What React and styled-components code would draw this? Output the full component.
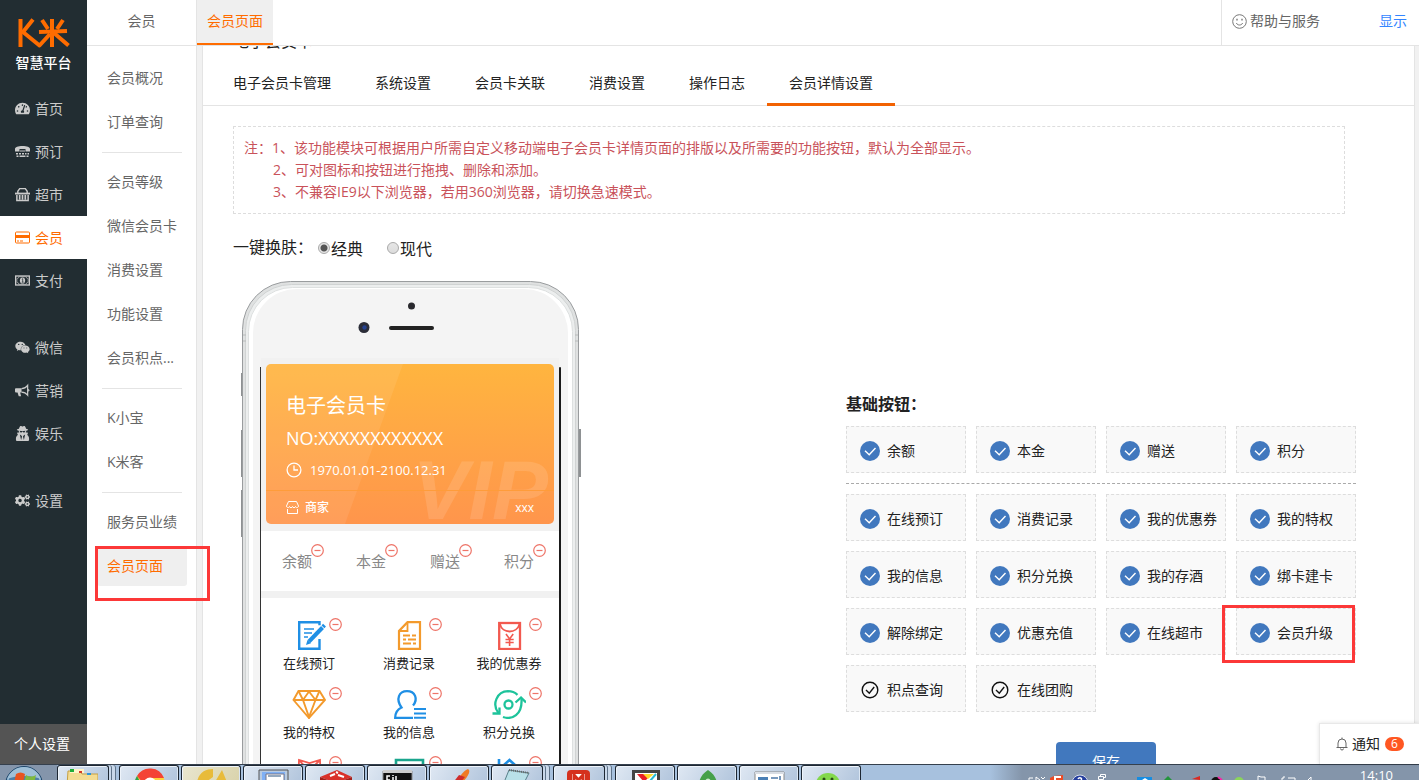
import React from 'react'
import styled, { createGlobalStyle, css } from 'styled-components'
import { FaTachometerAlt, FaWeixin, FaUserSecret, FaCogs } from 'react-icons/fa'

const ORANGE = '#ff6c00'
const BLUE = '#4178be'
const LINE = '#e4e4e4'

const GlobalStyle = createGlobalStyle`
* { box-sizing: border-box; }
body {
    margin: 0;
    font-family: "Open Sans", "Noto Sans CJK SC", sans-serif;
    font-size: 14px;
    line-height: 22px;
    color: #222;
    background: #fff;
}
button { font: inherit; border: 0; padding: 0; cursor: pointer; }
a { color: inherit; text-decoration: none; }
svg { display: block; }
`

const Screen = styled.div`
height: 100vh;
display: flex;
flex-direction: column;
overflow: hidden;
`

const Workspace = styled.div`
flex: 1;
min-height: 0;
display: flex;
position: relative;
`

/* ---------- dark sidebar ---------- */

const Sidebar = styled.aside`
width: 87px;
flex: none;
display: flex;
flex-direction: column;
background: #222d32;
`

const Brand = styled.div`
height: 87px;
padding-top: 17px;
display: flex;
flex-direction: column;
align-items: center;
color: #fff;
font-weight: 500;
line-height: 24px;
`

const NavList = styled.nav`
flex: 1;
display: flex;
flex-direction: column;
`

const NavLink = styled.a`
height: 43px;
padding-left: 15px;
display: flex;
align-items: center;
gap: 5px;
color: ${({ $active }) => ($active ? ORANGE : '#cbcbcb')};
background: ${({ $active }) => ($active ? '#fff' : 'transparent')};
margin-top: ${({ $gap }) => ($gap ? '24px' : '0')};

svg {
    width: 15px;
    height: 15px;
}
`

const Personal = styled.a`
height: 40px;
line-height: 40px;
text-align: center;
padding-right: 3px;
color: #fff;
background: #545454;
`

/* ---------- second level menu ---------- */

const SubMenu = styled.aside`
width: 110px;
flex: none;
border-right: 1px solid ${LINE};
color: #666;
`

const SubTitle = styled.div`
height: 46px;
line-height: 42px;
text-align: center;
border-bottom: 1px solid ${LINE};
`

const SubList = styled.nav`
padding-top: 10px;
display: flex;
flex-direction: column;
`

const SubLink = styled.a`
display: block;
height: 40px;
margin: 2px 9px 2px 10px;
padding-left: 10px;
line-height: 40px;
white-space: nowrap;
border-radius: 3px;
color: ${({ $active }) => ($active ? ORANGE : 'inherit')};
background: ${({ $active }) => ($active ? '#efefef' : 'transparent')};
`

const SubDivider = styled.hr`
align-self: stretch;
margin: 8px 14px 7px 15px;
border: 0;
border-top: 1px solid ${LINE};
`

const markStyle = css`
position: absolute;
border: 3px solid #fc3838;
pointer-events: none;
z-index: 3;
`

const MenuMark = styled.span`
${markStyle}
left: 8px;
top: 2px;
width: 115px;
height: 55px;
`

const MenuMarkHolder = styled.div`
position: relative;
display: flex;
flex-direction: column;
`

/* ---------- main column ---------- */

const Main = styled.div`
flex: 1;
min-width: 0;
display: flex;
flex-direction: column;
`

const TopBar = styled.header`
height: 46px;
flex: none;
display: flex;
justify-content: space-between;
border-bottom: 1px solid ${LINE};
line-height: 42px;
`

const PageTab = styled.a`
height: 45px;
padding: 0 10px;
color: ${ORANGE};
background: #efefef;
border-bottom: 2px solid ${ORANGE};
`

const TopTools = styled.div`
width: 198px;
padding: 0 12px 0 10px;
display: flex;
justify-content: space-between;
border-left: 1px solid ${LINE};
color: #666;
`

const HelpLink = styled.a`
display: flex;
align-items: center;
gap: 3px;
height: 42px;
`

const ShowLink = styled.a`
color: #3385ff;
`

const Scroller = styled.div`
flex: 1;
min-height: 0;
overflow: hidden;
padding: 0 4px 0 5px;
background: #f1f1f1;
`

const Panel = styled.section`
min-height: 100%;
border: 1px solid ${LINE};
border-width: 0 1px;
background: #fff;
`

const PanelTitle = styled.h1`
margin: -17px 0 0 30px;
height: 31px;
font-size: 16px;
line-height: 24px;
font-weight: 400;
`

const Tabs = styled.nav`
height: 46px;
padding-left: 8px;
display: flex;
border-bottom: 1px solid ${LINE};
`

const Tab = styled.a`
height: 46px;
padding: 0 22px;
line-height: 46px;
border-bottom: 3px solid ${({ $active }) => ($active ? '#f26202' : 'transparent')};
`

const Notes = styled.div`
margin: 20px 69px 0 30px;
padding: 10px;
border: 1px dashed #ddd;
color: #c9525a;

p {
    margin: 0;
}

p + p {
    padding-left: 29px;
}
`

const SkinRow = styled.fieldset`
margin: 22px 0 0 30px;
padding: 0;
border: 0;
display: flex;
align-items: center;
height: 24px;
font-size: 16px;
line-height: 24px;
`

const SkinOption = styled.label`
display: flex;
align-items: center;
margin-right: 24px;
padding-top: 2px;
`

const Radio = styled.input`
appearance: none;
width: 12px;
height: 12px;
margin: 0 1px 2px 0;
border: 1px solid #a9a9a9;
border-radius: 50%;
background: linear-gradient(#e6e6e6, #dcdcdc);

&:checked {
    background: radial-gradient(#555 0 3px, #e6e6e6 4px);
}
`

const SkinLabel = styled.span`
width: 85px;
padding-bottom: 2px;
`

const Editor = styled.div`
display: flex;
justify-content: space-between;
align-items: flex-start;
padding: 21px 58px 0 38px;
`

/* ---------- phone ---------- */

const Phone = styled.div`
position: relative;
width: 340px;
flex: none;
padding: 83px 0 60px 20px;
`

const PhoneFrame = styled.svg`
position: absolute;
left: 0;
top: 0;
`

const PhoneScreen = styled.div`
position: relative;
width: 298px;
background: #fff;
`

const CardArea = styled.div`
padding: 0 5px 7px;
background: #f1f1f1;
`

const Card = styled.div`
position: relative;
overflow: hidden;
height: 160px;
padding-top: 27px;
border-radius: 5px;
color: #fff;
background: linear-gradient(#ffb53f, #ff954c);

> * {
    position: relative;
    padding-left: 20px;
    padding-right: 20px;
}
`

const CardShine = styled.svg`
&& {
    position: absolute;
    left: 0;
    top: 0;
    padding: 0;
}
`

const Vip = styled.span`
&& {
    position: absolute;
    right: 6px;
    top: 84px;
    padding: 0;
    font-family: "Liberation Sans", sans-serif;
    font-size: 84px;
    line-height: 84px;
    font-style: italic;
    font-weight: 700;
    color: rgba(255, 255, 255, 0.12);
}
`

const CardName = styled.div`
font-size: 20px;
line-height: 30px;
`

const CardNo = styled.div`
font-size: 18px;
line-height: 34px;
`

const CardDate = styled.div`
display: flex;
align-items: center;
gap: 8px;
height: 30px;
font-size: 13px;
`

const CardFoot = styled.div`
display: flex;
align-items: center;
gap: 6px;
height: 34px;
margin-top: 5px;
border-top: 1px solid #ff9c3a;
font-size: 12px;
font-weight: 500;

span:last-child {
    margin-left: auto;
}
`

const Stats = styled.div`
display: grid;
grid-template-columns: repeat(4, 74px);
height: 67px;
border-bottom: 7px solid #f1f1f1;
`

const Stat = styled.div`
position: relative;
right: 1px;
text-align: center;
font-size: 15px;
line-height: 60px;
color: #888;
`

const RemoveButton = styled.button`
position: absolute;
left: ${({ $left }) => $left}px;
top: ${({ $top }) => $top}px;
background: none;
`

const AppGrid = styled.div`
display: grid;
grid-template-columns: repeat(3, 100px);
margin-left: -2px;
padding-top: 22px;
`

const AppCell = styled.div`
position: relative;
height: 69px;
display: flex;
flex-direction: column;
align-items: center;
font-size: 13px;
line-height: 26px;
`

/* ---------- button picker ---------- */

const Picker = styled.div`
width: 510px;
flex: none;
padding-top: 111px;
`

const PickerTitle = styled.h2`
margin: 0 0 10px;
font-size: 16px;
line-height: 24px;
font-weight: 700;
`

const PickerGrid = styled.div`
display: grid;
grid-template-columns: repeat(4, 1fr);
gap: 10px;

& + & {
    margin-top: 10px;
    padding-top: 10px;
    border-top: 1px dashed #aaa;
}
`

const Option = styled.label`
position: relative;
display: flex;
align-items: center;
gap: 7px;
height: 47px;
padding: 3px 0 0 13px;
border: 1px dashed #ddd;
background: #f9f9f9;
white-space: nowrap;

input {
    position: absolute;
    opacity: 0;
    margin: 0;
}
`

const OptionMark = styled.span`
${markStyle}
left: -15px;
top: -4px;
width: 133px;
height: 58px;
`

const SaveButton = styled.button`
display: block;
width: 100px;
height: 40px;
margin: 30px 0 0 210px;
border-radius: 4px;
color: #fff;
background: ${BLUE};
`

const Notice = styled.a`
position: absolute;
right: 0;
bottom: 0;
width: 100px;
height: 41px;
padding-left: 16px;
display: flex;
align-items: center;
gap: 4px;
background: #fff;
border: 1px solid #e8e8e8;
border-width: 1px 0 0 1px;
box-shadow: 0 0 4px rgba(0, 0, 0, 0.12);
`

const Badge = styled.span`
width: 19px;
height: 14px;
border-radius: 7px;
margin-left: 1px;
font-size: 12px;
line-height: 14px;
text-align: center;
color: #fff;
background: #ff5722;
`

/* ---------- taskbar ---------- */

const TaskBar = styled.footer`
height: 16px;
flex: none;
overflow: hidden;
display: flex;
border-top: 1px solid #35404d;
background: linear-gradient(90deg, #a7c1de 0 990px, #8495aa 1022px);
`

const StartArea = styled.button`
width: 57px;
flex: none;
height: 40px;
background: #8495ab;
`

const Task = styled.button`
width: 60px;
flex: none;
height: 40px;
display: flex;
align-items: flex-start;
margin-right: 2px;
padding: 0 0 0 14px;
border: 1px solid #1d2733;
border-bottom: 0;
border-radius: 3px 3px 0 0;
box-shadow: inset 1px 1px 0 #eef4fb, inset -1px 0 0 #dbe6f2;
background: ${({ $tone }) => $tone || 'linear-gradient(120deg, #dfe8f3, #b3c6dd 80%)'};

${({ $stack }) => $stack && css`
    width: 52px;
    margin-right: 10px;
    padding-left: 8px;
    box-shadow: inset 1px 1px 0 #eef4fb, 2px 0 0 #c9d8ea, 3px 0 0 #5f7389, 6px 0 0 #c9d8ea, 7px 0 0 #5f7389;
`}

svg {
    width: 32px;
    height: 15px;
    flex: none;
}
`

const Tray = styled.div`
margin-left: auto;
display: flex;
align-items: flex-start;
gap: 38px;
padding-right: 26px;
color: #fff;
font-size: 13px;
line-height: 20px;
`

/* ---------- drawings ---------- */

const Logo = () => (
    <svg width="56" height="34" viewBox="0 0 56 34" fill="none" stroke={ORANGE} strokeWidth="4" strokeLinejoin="round">
        <path d="M4.500 2v28" />
        <path d="M17 2.500L7 15l16.500 13.500L34 17" />
        <path d="M23 15l28-1" />
        <path d="M36 2v28" />
        <path d="M26 3l6 9M47 3l-6 9M38 16l14.500 12.500" />
    </svg>
)

const BookingIcon = () => (
    <svg viewBox="0 0 15 15" fill="currentColor">
        <path d="M0 7.500V5c0-2 3-3 7.500-3S15 3 15 5v2.500h-4.500V5h-6v2.500z" />
        <path d="M5 6.500h5v1H5z" />
        <path d="M1 9h2v1.500H1zM4 9h2v1.500H4zM7 9h2v1.500H7zM10 9h1.500v1.500H10zM12.500 9H14v1.500h-1.500zM1.500 11.500h2V13h-2zM4.500 11.500h6V13h-6zM11.500 11.500h2V13h-2z" />
    </svg>
)

const BasketIcon = () => (
    <svg viewBox="0 0 16 15" fill="none" stroke="currentColor">
        <path d="M3 6V4l2-2.800h6L13 4v2" strokeWidth="1.500" />
        <path d="M0 6.500h16" strokeWidth="2" />
        <path d="M2 8v6h12V8" strokeWidth="1.600" />
        <path d="M5 8v5M8 8v5M11 8v5" strokeWidth="1.800" />
    </svg>
)

const CardIcon = () => (
    <svg viewBox="0 0 15 15">
        <rect x=".5" y="2" width="14" height="11" rx="1" fill="none" stroke="currentColor" />
        <path d="M0 5h15v3H0zM2 10.500h2v1H2zM5 10.500h3v1H5z" fill="currentColor" />
    </svg>
)

const MoneyIcon = () => (
    <svg viewBox="0 0 16 15">
        <rect x=".7" y="2.700" width="14.600" height="9.600" fill="none" stroke="currentColor" strokeWidth="1.400" />
        <path d="M2 5.500a2 2 0 002-2h8a2 2 0 002 2v4a2 2 0 00-2 2H4a2 2 0 00-2-2z" fill="none" stroke="currentColor" strokeWidth=".6" />
        <ellipse cx="8" cy="7.500" rx="2.800" ry="3.300" fill="currentColor" />
        <path d="M7.300 6.200l.9-.6v3.600M7.200 9.300h2" fill="none" stroke="#222d32" strokeWidth=".8" />
    </svg>
)

const HornIcon = () => (
    <svg viewBox="0 0 16 15">
        <path d="M1 5h6v4.500H5.500l1 4H4L2.700 9.500H1A1 1 0 010 8.500V6a1 1 0 011-1z" fill="currentColor" />
        <path d="M7 5.500c3 0 5-1.500 6.500-3.500v10.500C12 10.500 10 9.200 7 9.200" fill="none" stroke="currentColor" strokeWidth="1.300" />
        <path d="M14 6a1.300 1.300 0 010 2.600z" fill="currentColor" />
    </svg>
)

const SmileIcon = () => (
    <svg width="15" height="15" viewBox="0 0 15 15" fill="none" stroke="#777">
        <circle cx="7.500" cy="7.500" r="6.800" />
        <path d="M4.300 9c.8 1.500 2 2 3.200 2s2.400-.5 3.200-2" />
        <path d="M5 4.800v1.600M10 4.800v1.600" strokeWidth="1.400" />
    </svg>
)

const BellIcon = () => (
    <svg width="12" height="14" viewBox="0 0 12 14" fill="none" stroke="#666">
        <path d="M.5 10.500h11M2 10.500V6a4 4 0 018 0v4.500M6 2V.5M4.500 11.500a1.500 1.500 0 003 0" />
    </svg>
)

const MinusIcon = () => (
    <svg width="13" height="13" viewBox="0 0 13 13" fill="none" stroke="#ee7468" strokeWidth="1.200">
        <circle cx="6.500" cy="6.500" r="5.800" />
        <path d="M3.500 6.500h6" />
    </svg>
)

const CheckIcon = ({ on }) => (
    <svg width="20" height="20" viewBox="0 0 20 20" fill="none">
        {on
            ? <circle cx="10" cy="10" r="10" fill={BLUE} />
            : <circle cx="10" cy="10" r="7.800" stroke="#111" strokeWidth="1.400" />}
        <path d={on ? 'M5 9.800l4.200 4L15.500 7' : 'M6 10l3.300 3.200L14.200 7'} stroke={on ? '#fff' : '#111'} strokeWidth="1.400" />
    </svg>
)

const ClockIcon = () => (
    <svg width="16" height="16" viewBox="0 0 16 16" fill="none" stroke="#fff" strokeWidth="1.300">
        <circle cx="8" cy="8" r="6.900" />
        <path d="M8 3.500V8h4" />
    </svg>
)

const ShopIcon = () => (
    <svg width="13" height="13" viewBox="0 0 13 13" fill="none" stroke="#fff">
        <path d="M2.500.5h8l2 4.500c0 2-2.800 2-3 .5-.2 1.500-2.800 1.500-3 0-.2 1.500-2.800 1.500-3 0-.2 1.500-3 1.500-3-.5z" />
        <path d="M1.500 8v4.500h10V8" />
    </svg>
)

const appIcons = {
    book: (
        <>
            <path d="M27.500 19v9.800H7.200V2.200h20.300v3" stroke="#1f8fe5" strokeWidth="2.400" />
            <path d="M12 9h10M12 13h8M12 17h4" stroke="#1f8fe5" strokeWidth="1.600" />
            <path d="M17 21.500L30.500 7.500" stroke="#1f8fe5" strokeWidth="4" />
            <path d="M14 25l1.500-5 3.500 3.300z" fill="#1f8fe5" />
            <path d="M31 6.800l1.500-1.600" stroke="#1f8fe5" strokeWidth="4" />
        </>
    ),
    record: (
        <g stroke="#f39a2c">
            <path d="M15.500 2.200H28v26.600H7V11z" strokeWidth="2.200" />
            <path d="M15.500 2v9H7" strokeWidth="1.800" />
            <path d="M11 15.500h7M20 15.500h4M11 19.500h3M16 19.500h8M11 23.500h8M21 23.500h3" strokeWidth="1.800" />
        </g>
    ),
    coupon: (
        <g stroke="#f2594f">
            <rect x="7.200" y="3" width="20.800" height="26" strokeWidth="2.300" />
            <path d="M8 4c2 10 17 10 19.500 0" strokeWidth="1.800" />
            <path d="M14 14l3.600 5 3.600-5M17.600 19v7M13.500 19.500h8.200M13.500 22.500h8.200" strokeWidth="1.600" />
        </g>
    ),
    diamond: (
        <g stroke="#f39a2c" strokeWidth="1.900">
            <path d="M6.500 2h21L33 11 17 29 1.500 11z" />
            <path d="M1.500 11H33M11 11l6 17 6.500-17M6.500 2L11 11l6-8.500 6.500 8.500 4-9" />
        </g>
    ),
    person: (
        <g stroke="#1f8fe5" strokeWidth="2.300">
            <path d="M21 28.800H3.200c0-6 2.500-8.500 6.300-10.300C3.500 10 7 2.200 15 2.200S26.500 10 21 16.500" />
            <path d="M22 20h12M22 24.500h12M22 28.800h12" strokeWidth="2" />
        </g>
    ),
    cycle: (
        <g stroke="#1dc39b" strokeWidth="2.300">
            <path d="M6.500 24C-.500 15 5 2.500 16 2.200c4 0 7 1.300 9.500 3.600" />
            <path d="M11 28c9 3 19.500-2 18.500-18" />
            <circle cx="16.500" cy="15.500" r="4" />
            <path d="M.5 24.500h7v-6M23.500 13.500l5.500-5 5 5" />
        </g>
    ),
    gift: <path d="M6 30L7 2l10.500 3L28 2l1 28M7 2l10 11L28 2" stroke="#f2594f" strokeWidth="1.800" />,
    store: <path d="M4 30V2h27v28z" stroke="#1aa58d" strokeWidth="2.600" />,
    upgrade: <path d="M7 1v20M12 7l5.500-5L23 7" stroke="#1f8fe5" strokeWidth="2.600" />,
}

const AppIcon = ({ name }) => (
    <svg width="34" height="30" viewBox="0 0 34 30" fill="none">{appIcons[name]}</svg>
)

const PhoneDrawing = () => (
    <PhoneFrame width="341" height="620" viewBox="0 0 341 620" fill="none">
        <g stroke="#8e9193" strokeWidth="2">
            <path d="M1 92v23M1 149v47M1 209v47M339 148v48" />
        </g>
        <rect x="1.500" y=".5" width="336" height="640" rx="48" fill="#dfe1e1" stroke="#999c9e" />
        <rect x="4.500" y="3.500" width="330" height="640" rx="46" fill="#eceeee" stroke="#d0d3d3" />
        <path d="M2 54h3M2 60h3M334 54h3M334 60h3" stroke="#b8bbbb" />
        <rect x="7.500" y="6.500" width="324" height="640" rx="44" fill="#fff" stroke="#dde0e0" />
        <rect x="12" y="8" width="315" height="640" rx="44" fill="#f4f4f4" />
        <circle cx="170.500" cy="25" r="3.500" fill="#29292e" />
        <circle cx="123" cy="46.500" r="5.500" fill="#2b2d38" />
        <circle cx="123.500" cy="46.500" r="2.200" fill="#24418f" />
        <rect x="148" y="45" width="45" height="4" rx="2" fill="#222" />
        <rect x="20" y="77" width="298" height="10" fill="#f1f1f1" />
        <rect x="19" y="86" width="1" height="550" fill="#333" />
        <rect x="318" y="86" width="2" height="550" rx="1" fill="#1a1a1a" />
    </PhoneFrame>
)

const WindowsOrb = () => (
    <svg width="57" height="40" viewBox="0 0 57 40">
        <circle cx="24" cy="20" r="18.500" fill="#4e7fa8" stroke="#1d4569" />
        <circle cx="24" cy="20" r="17" fill="none" stroke="#b9dcf0" />
        <path d="M7 14a18 18 0 0134 0c-10-4-24-4-34 0z" fill="#9fc0d8" />
        <path d="M16 9c3-2 6-2 9 0l-2 9c-3-2-6-2-9 0z" fill="#e8531f" />
        <path d="M26 10c3 2 6 2 10 0l-2 9c-4 2-7 2-10 0z" fill="#7fb93f" />
    </svg>
)

const taskIcons = {
    folder: <><path d="M2 5h12l2 3h16v12H1z" fill="#f3dc93" stroke="#c59f42" /><path d="M4 3h14v4H4z" fill="#fff4c8" /><path d="M4 3h4v3H4z" fill="#1fae38" /><path d="M13 5h3v2h-3z" fill="#d5392a" /><path d="M21 7h4v2h-4z" fill="#2b96dc" /></>,
    chrome: <><circle cx="16" cy="18" r="15" fill="#fdd33c" /><path d="M3 10a15 15 0 0127 2H16l-6 6z" fill="#f44336" /><path d="M3 10l9 16-8 2a15 15 0 01-1-18z" fill="#31a24c" /><circle cx="16" cy="18" r="6.500" fill="#fff" /></>,
    yellow: <path d="M1 16C3 6 10 3 17 3v8l-7 5zM19 16l7-12 5 12z" fill="#e8bb3a" />,
    pc: <><path d="M1 4h29v16H1z" fill="#b9cbe0" stroke="#555" /><path d="M4 6h23v10H4z" fill="#7fb0f5" /><path d="M8 8h18v10H8z" fill="#fff" stroke="#778" /><path d="M10 10h13" stroke="#94a8be" strokeWidth="2" /></>,
    redis: <><path d="M0 11L17 4l15 7-16 6z" fill="#d9312a" /><path d="M0 11v6h32v-6l-16 6z" fill="#a41e18" /><path d="M10 10l5-2M18 9l6 2M16 6l2 1" stroke="#fff" strokeWidth="2" /></>,
    cmd: <><path d="M1 5h29v14H1z" fill="#111" stroke="#888" /><path d="M1 4h29v3H1z" fill="#ccc" /><path d="M8 10H5v4h3M11 9v1M11 11v3M14 10v4" stroke="#fff" strokeWidth="1.500" fill="none" /></>,
    pen: <><path d="M24 3c4 2-2 11-8 15l-3-2C16 10 19 5 24 3z" fill="#ef7b25" /><path d="M15 9l6 2-6 7H8z" fill="#cf2c2c" /></>,
    pad: <><path d="M9 4l20 3-6 12H3z" fill="#b9e0e8" stroke="#58808a" /><path d="M9 4l20 3" stroke="#666" strokeWidth="2" strokeDasharray="1 1" /></>,
    mred: <><rect x="5" y="4" width="23" height="20" rx="4" fill="#d5311e" /><path d="M10 8h13v12H10z" fill="#fff" /><path d="M12 18V9l4.500 5L21 9v9" stroke="#d5311e" strokeWidth="3" fill="none" /></>,
    edit: <><path d="M2 4h28v16H2z" fill="#444" /><path d="M5 7h22v12H5z" fill="#fff" /><path d="M7 8l7 8 8-8z" fill="#e81e25" /><path d="M13 8l5 5 6-5z" fill="#ffd82b" /><path d="M20 15l6-7" stroke="#27b9d4" strokeWidth="2" /></>,
    leaf: <><path d="M16 4c6 4 9 9 9 15H7C7 13 10 8 16 4z" fill="#46a049" /><circle cx="16" cy="15" r="2.500" fill="#cde9cd" /></>,
    win: <><path d="M1 6h29v14H1z" fill="#fff" stroke="#888" /><path d="M1 6h29v2H1z" fill="#d8dde4" /><path d="M4 11h10v8H4z" fill="#4a7fb5" /><path d="M17 12h7M26 10v6" stroke="#7899bd" strokeWidth="2" /></>,
    chat: <><ellipse cx="12" cy="18" rx="12" ry="11" fill="#83d84b" /><circle cx="8" cy="13" r="1.500" fill="#2a4a18" /><circle cx="16" cy="13" r="1.500" fill="#2a4a18" /></>,
}

const TrayIcons = () => (
    <svg width="294" height="15" viewBox="0 0 294 15" fill="none">
        <path d="M5 13H1v2M8 15v-3l4 3M13 12l2 2 2-2" stroke="#fff" />
        <path d="M22 13l4-2 9-1v5H22z" fill="#ee4a23" />
        <path d="M33 12h-6v3" stroke="#fff" strokeWidth="2" />
        <circle cx="52" cy="18" r="8" fill="#243e9d" stroke="#d5dbe8" />
        <path d="M50 14c1-2 5-1 3 1" stroke="#fff" strokeWidth="1.500" />
        <path d="M70.500 11.500h5v3h-5zM72.500 11V9.500h5v3h-2" stroke="#fff" />
        <path d="M109 12h15v3h-15z" fill="#168de2" />
        <path d="M114 15l3-2 3 2z" fill="#fff" />
        <path d="M136 15l4-4 4 4z" fill="#24953d" />
        <path d="M164 14l8-3v4z" fill="#dc2921" />
        <circle cx="188" cy="17" r="5" fill="#111" />
        <path d="M190 12l4 3" stroke="#f42aa7" strokeWidth="2" />
        <circle cx="211" cy="17" r="5" fill="#8bd55a" />
        <path d="M230 15v-4l3 1h4v3M254 15v-2h2v-2M260 13h7v2M280 15l3-3v3" stroke="#fff" />
    </svg>
)

/* ---------- data ---------- */

const nav = [
    { text: '首页', icon: <FaTachometerAlt /> },
    { text: '预订', icon: <BookingIcon /> },
    { text: '超市', icon: <BasketIcon /> },
    { text: '会员', icon: <CardIcon />, active: true },
    { text: '支付', icon: <MoneyIcon /> },
    { text: '微信', icon: <FaWeixin />, gap: true },
    { text: '营销', icon: <HornIcon /> },
    { text: '娱乐', icon: <FaUserSecret /> },
    { text: '设置', icon: <FaCogs />, gap: true },
]

const subMenu = [
    ['会员概况', '订单查询'],
    ['会员等级', '微信会员卡', '消费设置', '功能设置', '会员积点...'],
    ['K小宝', 'K米客'],
    ['服务员业绩'],
]

const tabs = ['电子会员卡管理', '系统设置', '会员卡关联', '消费设置', '操作日志', '会员详情设置']

const stats = ['余额', '本金', '赠送', '积分']

const apps = [
    ['在线预订', 'book'], ['消费记录', 'record'], ['我的优惠券', 'coupon'],
    ['我的特权', 'diamond'], ['我的信息', 'person'], ['积分兑换', 'cycle'],
    ['解除绑定', 'gift'], ['在线超市', 'store'], ['会员升级', 'upgrade'],
]

const options = [
    '在线预订', '消费记录', '我的优惠券', '我的特权',
    '我的信息', '积分兑换', '我的存酒', '绑卡建卡',
    '解除绑定', '优惠充值', '在线超市', '会员升级',
    '积点查询', '在线团购',
]
const unchecked = ['积点查询', '在线团购']

const YELLOW_TASK = 'linear-gradient(120deg, #e9e6cf, #d6cfa4)'
const tasks = [
    { icon: 'folder', stack: true },
    { icon: 'chrome' },
    { icon: 'yellow', tone: YELLOW_TASK },
    { icon: 'pc' },
    { icon: 'redis' },
    { icon: 'cmd' },
    { icon: 'pen' },
    { icon: 'pad', stack: true },
    { icon: 'mred', stack: true },
    { icon: 'edit' },
    { icon: 'leaf' },
    { icon: 'win' },
    { icon: 'chat' },
]

const ButtonOption = ({ text, marked }) => {
    const [on, setOn] = React.useState(!unchecked.includes(text))
    return (
        <Option>
            <input type="checkbox" checked={on} onChange={() => setOn(!on)} />
            <CheckIcon on={on} />
            {text}
            {marked && <OptionMark />}
        </Option>
    )
}

const App = () => {
    const [skin, setSkin] = React.useState('经典')

    return (
        <Screen>
            <GlobalStyle />
            <Workspace>
                <Sidebar>
                    <Brand>
                        <Logo />
                        <span>智慧平台</span>
                    </Brand>
                    <NavList>
                        {nav.map(({ text, icon, active, gap }) => (
                            <NavLink key={text} href="#/" $active={active} $gap={gap}>{icon}{text}</NavLink>
                        ))}
                    </NavList>
                    <Personal href="#/">个人设置</Personal>
                </Sidebar>

                <SubMenu>
                    <SubTitle>会员</SubTitle>
                    <SubList>
                        {subMenu.map((group, i) => (
                            <React.Fragment key={group[0]}>
                                {i > 0 && <SubDivider />}
                                {group.map(text => <SubLink key={text} href="#/">{text}</SubLink>)}
                            </React.Fragment>
                        ))}
                        <MenuMarkHolder>
                            <SubLink href="#/" $active>会员页面</SubLink>
                            <MenuMark />
                        </MenuMarkHolder>
                    </SubList>
                </SubMenu>

                <Main>
                    <TopBar>
                        <PageTab href="#/">会员页面</PageTab>
                        <TopTools>
                            <HelpLink href="#/"><SmileIcon />帮助与服务</HelpLink>
                            <ShowLink href="#/">显示</ShowLink>
                        </TopTools>
                    </TopBar>
                    <Scroller>
                        <Panel>
                            <PanelTitle>电子会员卡</PanelTitle>
                            <Tabs>
                                {tabs.map(text => (
                                    <Tab key={text} href="#/" $active={text === '会员详情设置'}>{text}</Tab>
                                ))}
                            </Tabs>
                            <Notes>
                                <p>注：1、该功能模块可根据用户所需自定义移动端电子会员卡详情页面的排版以及所需要的功能按钮，默认为全部显示。</p>
                                <p>2、可对图标和按钮进行拖拽、删除和添加。</p>
                                <p>3、不兼容IE9以下浏览器，若用360浏览器，请切换急速模式。</p>
                            </Notes>
                            <SkinRow>
                                <SkinLabel>一键换肤：</SkinLabel>
                                {['经典', '现代'].map(name => (
                                    <SkinOption key={name}>
                                        <Radio type="radio" name="skin" checked={skin === name} onChange={() => setSkin(name)} />
                                        {name}
                                    </SkinOption>
                                ))}
                            </SkinRow>
                            <Editor>
                                <Phone>
                                    <PhoneDrawing />
                                    <PhoneScreen>
                                        <CardArea>
                                            <Card>
                                                <CardShine width="288" height="160" viewBox="0 0 288 160">
                                                    <path d="M0 0h137L79 160H0z" fill="#fff" opacity=".08" />
                                                </CardShine>
                                                <Vip>VIP</Vip>
                                                <CardName>电子会员卡</CardName>
                                                <CardNo>NO:XXXXXXXXXXXX</CardNo>
                                                <CardDate><ClockIcon />1970.01.01-2100.12.31</CardDate>
                                                <CardFoot><ShopIcon /><span>商家</span><span>xxx</span></CardFoot>
                                            </Card>
                                        </CardArea>
                                        <Stats>
                                            {stats.map(text => (
                                                <Stat key={text}>
                                                    {text}
                                                    <RemoveButton $left={51} $top={13} aria-label="删除"><MinusIcon /></RemoveButton>
                                                </Stat>
                                            ))}
                                        </Stats>
                                        <AppGrid>
                                            {apps.map(([text, icon]) => (
                                                <AppCell key={text}>
                                                    <AppIcon name={icon} />
                                                    {text}
                                                    <RemoveButton $left={70} $top={-2} aria-label="删除"><MinusIcon /></RemoveButton>
                                                </AppCell>
                                            ))}
                                        </AppGrid>
                                    </PhoneScreen>
                                </Phone>
                                <Picker>
                                    <PickerTitle>基础按钮：</PickerTitle>
                                    <PickerGrid>
                                        {stats.map(text => <ButtonOption key={text} text={text} />)}
                                    </PickerGrid>
                                    <PickerGrid>
                                        {options.map(text => (
                                            <ButtonOption key={text} text={text} marked={text === '会员升级'} />
                                        ))}
                                    </PickerGrid>
                                    <SaveButton>保存</SaveButton>
                                </Picker>
                            </Editor>
                        </Panel>
                    </Scroller>
                </Main>

                <Notice href="#/">
                    <BellIcon />
                    通知
                    <Badge>6</Badge>
                </Notice>
            </Workspace>

            <TaskBar>
                <StartArea aria-label="开始"><WindowsOrb /></StartArea>
                {tasks.map(({ icon, stack, tone }) => (
                    <Task key={icon} $stack={stack} $tone={tone} aria-label={icon}>
                        <svg viewBox="0 0 32 15" fill="none">{taskIcons[icon]}</svg>
                    </Task>
                ))}
                <Tray>
                    <TrayIcons />
                    <span>14:10</span>
                </Tray>
            </TaskBar>
        </Screen>
    )
}

export default App
